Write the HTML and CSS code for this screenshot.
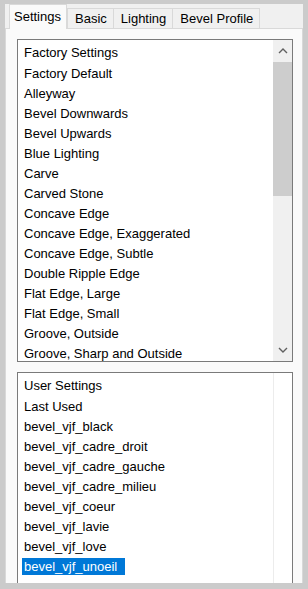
FILE: index.html
```html
<!DOCTYPE html>
<html lang="en">
<head>
    <meta charset="UTF-8">
    <title>Bevel - Settings</title>
    <link rel="stylesheet" href="styles.css">
</head>
<body>
    <div class="window">
        <div class="tabs">
            <div class="tab active">Settings</div>
            <div class="tab">Basic</div>
            <div class="tab">Lighting</div>
            <div class="tab">Bevel Profile</div>
        </div>

        <div class="panel">
            <!-- Factory presets -->
            <div class="listbox factory">
                <div class="list-items">
                    <div class="list-header">Factory Settings</div>
                    <div class="list-item">Factory Default</div>
                    <div class="list-item">Alleyway</div>
                    <div class="list-item">Bevel Downwards</div>
                    <div class="list-item">Bevel Upwards</div>
                    <div class="list-item">Blue Lighting</div>
                    <div class="list-item">Carve</div>
                    <div class="list-item">Carved Stone</div>
                    <div class="list-item">Concave Edge</div>
                    <div class="list-item">Concave Edge, Exaggerated</div>
                    <div class="list-item">Concave Edge, Subtle</div>
                    <div class="list-item">Double Ripple Edge</div>
                    <div class="list-item">Flat Edge, Large</div>
                    <div class="list-item">Flat Edge, Small</div>
                    <div class="list-item">Groove, Outside</div>
                    <div class="list-item">Groove, Sharp and Outside</div>
                </div>
                <div class="scrollbar">
                    <div class="scroll-btn">
                        <svg width="10" height="6" viewBox="0 0 10 6"><polyline points="1,5 5,1 9,5" fill="none" stroke="#606060" stroke-width="1.4"/></svg>
                    </div>
                    <div class="scroll-track">
                        <div class="scroll-thumb"></div>
                    </div>
                    <div class="scroll-btn">
                        <svg width="10" height="6" viewBox="0 0 10 6"><polyline points="1,1 5,5 9,1" fill="none" stroke="#606060" stroke-width="1.4"/></svg>
                    </div>
                </div>
            </div>

            <!-- User presets -->
            <div class="listbox user">
                <div class="list-items">
                    <div class="list-header">User Settings</div>
                    <div class="list-item">Last Used</div>
                    <div class="list-item">bevel_vjf_black</div>
                    <div class="list-item">bevel_vjf_cadre_droit</div>
                    <div class="list-item">bevel_vjf_cadre_gauche</div>
                    <div class="list-item">bevel_vjf_cadre_milieu</div>
                    <div class="list-item">bevel_vjf_coeur</div>
                    <div class="list-item">bevel_vjf_lavie</div>
                    <div class="list-item">bevel_vjf_love</div>
                    <div class="list-item"><span class="selected">bevel_vjf_unoeil</span></div>
                </div>
                <div class="scroll-gutter"></div>
            </div>
        </div>
    </div>
</body>
</html>
```

FILE: styles.css
```css
body {
    margin: 0;
    background-color: #cbcbcb;
    font-family: "Liberation Sans", Arial, sans-serif;
    font-size: 13px;
    color: #000;
}

.window {
    width: 308px;
    height: 589px;
    padding: 4px 5px 0 5px;
    box-sizing: border-box;
}

.tabs {
    display: flex;
    align-items: flex-end;
    height: 24px;
    padding-left: 4px;
    background-color: #f0f0f0;
    position: relative;
    z-index: 1;
}

.tab {
    height: 20px;
    line-height: 20px;
    padding: 0 6px 0 7px;
    background-color: #f0f0f0;
    border: 1px solid #d9d9d9;
    border-bottom: none;
    margin-left: -1px;
    box-sizing: border-box;
}

.tab.active {
    height: 25px;
    line-height: 23px;
    padding: 0 5px 0 4px;
    background-color: #fafafa;
    margin-bottom: -1px;
    margin-left: 0;
    margin-right: 1px;
}

.panel {
    height: 555px;
    background-color: #fafafa;
    border: 1px solid #d9d9d9;
    border-bottom: none;
    box-sizing: border-box;
    padding: 10px 9px 0 11px;
    overflow: hidden;
    display: flex;
    flex-direction: column;
    gap: 10px;
}

.listbox {
    display: flex;
    border: 1px solid #7a7a7a;
    background-color: #fff;
    flex: none;
    box-sizing: border-box;
}

.listbox.factory {
    height: 323px;
}

.listbox.user {
    height: 240px;
}

.list-items {
    flex: 1;
    overflow: hidden;
    padding-top: 2px;
}

.list-header {
    height: 22px;
    line-height: 22px;
    padding-left: 6px;
    white-space: nowrap;
}

.list-item {
    height: 20px;
    line-height: 20px;
    padding-left: 6px;
    white-space: nowrap;
}

.selected {
    display: inline-block;
    margin-left: -2px;
    padding: 0 8px 0 2px;
    line-height: 17px;
    background-color: #0078d7;
    color: #fff;
}

.scrollbar {
    width: 19px;
    display: flex;
    flex-direction: column;
    background-color: #f0f0f0;
}

.scroll-btn {
    height: 22px;
    display: flex;
    align-items: center;
    justify-content: center;
    flex: none;
}

.scroll-track {
    flex: 1;
}

.scroll-thumb {
    height: 134px;
    background-color: #cdcdcd;
}

.scroll-gutter {
    width: 19px;
    border-left: 1px solid #ececec;
    box-sizing: border-box;
}
```
